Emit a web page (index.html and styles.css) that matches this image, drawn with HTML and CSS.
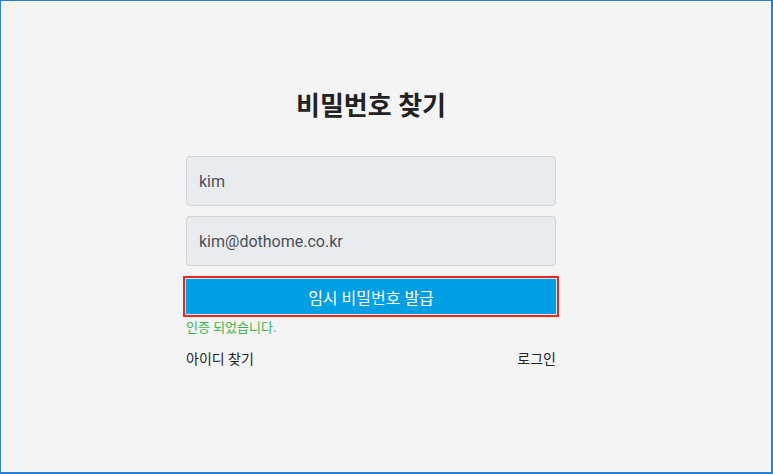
FILE: index.html
```html
<!DOCTYPE html>
<html lang="ko">
<head>
<meta charset="utf-8">
<link rel="stylesheet" href="styles.css">
</head>
<body>
<div class="frame">
  <div class="wrap">
    <h1 class="title">비밀번호 찾기</h1>
    <form class="form">
      <input class="field" type="text" value="kim" readonly>
      <input class="field" type="text" value="kim@dothome.co.kr" readonly>
      <button class="btn" type="button">임시 비밀번호 발급</button>
      <p class="msg">인증 되었습니다.</p>
      <div class="links">
        <a class="link" href="#">아이디 찾기</a>
        <a class="link" href="#">로그인</a>
      </div>
    </form>
  </div>
</div>
</body>
</html>
```

FILE: styles.css
```css
* { box-sizing: border-box; }
html, body { margin: 0; padding: 0; }
body {
  font-family: Roboto, "Noto Sans CJK KR", sans-serif;
  background: #f4f4f4;
}
.frame {
  width: 773px;
  height: 474px;
  border: 2px solid #2b7fd1;
  border-top-width: 1px;
  border-left-width: 1px;
  background: #f4f4f4;
}
.wrap {
  display: flex;
  flex-direction: column;
  align-items: center;
  padding-right: 30px;
  padding-top: 87px;
}
.title {
  margin: 0 0 32px;
  font-size: 26px;
  line-height: 36px;
  font-weight: 700;
  color: #222;
}
.form {
  width: 370px;
  display: flex;
  flex-direction: column;
  margin: 0;
}
.field {
  height: 50px;
  margin-bottom: 10px;
  padding: 0 12px;
  border: 1px solid #ced4da;
  border-radius: 4px;
  background: #e9ecef;
  font-family: Roboto, "Noto Sans CJK KR", sans-serif;
  font-size: 16px;
  color: #495057;
  outline: none;
}
.btn {
  height: 35px;
  margin-top: 3px;
  border: none;
  background: #009fe3;
  color: #fff;
  font-family: Roboto, "Noto Sans CJK KR", sans-serif;
  font-size: 16px;
  box-shadow: 0 0 0 1px #cde9f6, 0 0 0 3px #f2251a;
}
.msg {
  margin: 5px 0 0;
  font-size: 13px;
  line-height: 18px;
  color: #3bb449;
}
.links {
  display: flex;
  justify-content: space-between;
  margin-top: 12px;
}
.link {
  font-size: 14px;
  line-height: 20px;
  color: #222;
  text-decoration: none;
}
```
